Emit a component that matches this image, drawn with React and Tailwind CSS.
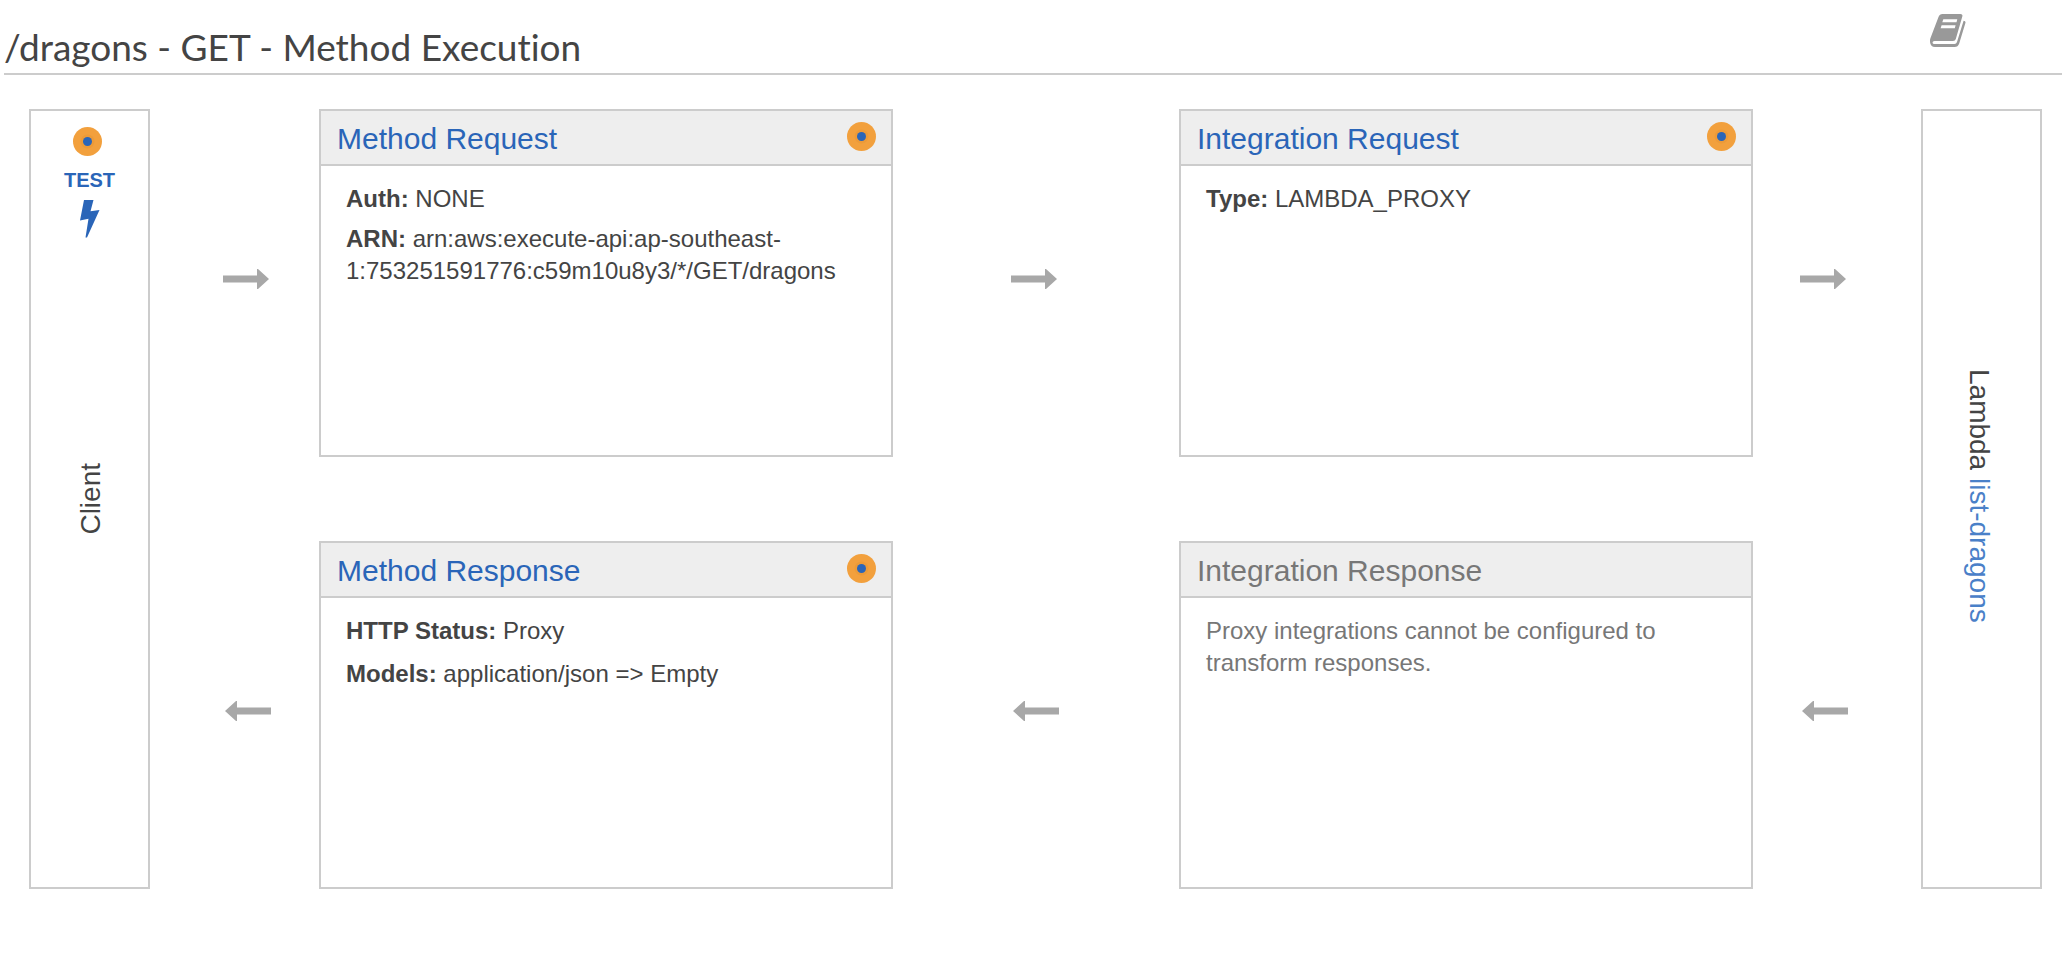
const LINK = "text-[#2a65b8]";

function Arrow({ left = false }) {
  return (
    <svg width="46" height="20" viewBox="0 0 46 20" className="shrink-0" aria-hidden="true">
      <path
        d={left ? "M46 6.5H12V0H11L0 10L11 20H12V13.5H46Z" : "M0 6.5H34V0H35L46 10L35 20H34V13.5H0Z"}
        fill="#a8a8a8"
      />
    </svg>
  );
}

function Dot() {
  return (
    <svg width="29" height="29" viewBox="0 0 29 29" className="shrink-0" aria-hidden="true">
      <circle cx="14.5" cy="14.5" r="14.5" fill="#f2a03d" />
      <circle cx="14.5" cy="14.5" r="7" fill="#ec9a38" />
      <circle cx="14.5" cy="14.5" r="4.5" fill="#2a65b8" />
    </svg>
  );
}

function Bolt() {
  return (
    <svg width="20" height="38" viewBox="0 0 20 38" aria-hidden="true">
      <path d="M4 0H13.5L10.5 11.3L19.5 10L7 37.5H5.5L8.5 18.8L0 20.5Z" fill="#2a65b8" />
    </svg>
  );
}

function Book() {
  return (
    <svg width="36" height="33" viewBox="0 0 36 33" aria-hidden="true">
      <path
        fill="#999"
        d="M12.5 0H30.5Q33 0 32.3 2.5L25.8 25Q25.2 27 23 27H4.5Q2.5 27 2.5 28.5Q2.5 30 4.5 30H24.5Q26.3 30 27 28L33.6 6.8Q36 7 35.4 9L29.2 29.5Q28 33 24.5 33H5Q0.5 33 0 28Q-0.3 26.5 0.5 24L8.5 3Q9.5 0 12.5 0Z"
      />
      <path fill="#fff" d="M13.3 5.3H27.3L26.5 8.3H12.3ZM11.6 11.2H25.6L24.8 14.2H10.6Z" />
    </svg>
  );
}

function Card({ title, disabled = false, children }) {
  return (
    <section className="border-2 border-[#ccc] bg-white">
      <header className="flex items-start justify-between border-b-2 border-[#ccc] bg-[#eee] pt-[11px] pr-[15px] pb-2 pl-4">
        <h2 className="text-[30px] leading-[34px]">
          {disabled ? (
            <span className="text-[#777]">{title}</span>
          ) : (
            <a href="#" className={LINK}>
              {title}
            </a>
          )}
        </h2>
        {!disabled && <Dot />}
      </header>
      <div className="px-[25px] pt-[17px] pb-4 text-2xl leading-8">{children}</div>
    </section>
  );
}

export default function App() {
  return (
    <div className="bg-white pb-[75px] pl-1 font-['Liberation_Sans',Arial,sans-serif] text-[#444]">
      <header className="flex items-start justify-between border-b-2 border-[#ccc] pr-24">
        <h1 className="pt-[22px] pb-0.5 font-[Lato,sans-serif] text-[37px] leading-[49px] [font-variant-ligatures:none]">
          /dragons - GET - Method Execution
        </h1>
        <button type="button" aria-label="Documentation" className="pt-3.5">
          <Book />
        </button>
      </header>

      <main className="grid grid-cols-[121px_169px_1fr_286px_1fr_168px_121px] grid-rows-[minmax(348px,auto)_minmax(348px,auto)] gap-y-[84px] pt-[34px] pr-5 pl-[25px]">
        <section className="row-span-2 grid border-2 border-[#ccc]">
          <button
            type="button"
            className="col-start-1 row-start-1 flex flex-col items-center self-start pt-4 text-xl font-bold text-[#2a65b8]"
          >
            <span className="pr-1">
              <Dot />
            </span>
            <span className="pt-2.5 pb-1.5 leading-7">TEST</span>
            <Bolt />
          </button>
          <h2 className="col-start-1 row-start-1 rotate-180 place-self-center pr-0.5 text-[28px] leading-9 [writing-mode:vertical-rl]">
            Client
          </h2>
        </section>

        <div className="flex items-center justify-start pb-2 pl-[73px]">
          <Arrow />
        </div>
        <Card title="Method Request">
          <p className="pb-2">
            <b>Auth:</b> NONE
          </p>
          <p>
            <b>ARN:</b> arn:aws:execute-api:ap-southeast-1:753251591776:c59m10u8y3/*/GET/dragons
          </p>
        </Card>
        <div className="flex items-center justify-center pr-1 pb-2">
          <Arrow />
        </div>
        <Card title="Integration Request">
          <p>
            <b>Type:</b> LAMBDA_PROXY
          </p>
        </Card>
        <div className="flex items-center justify-end pr-[75px] pb-2">
          <Arrow />
        </div>

        <section className="row-span-2 grid border-2 border-[#ccc] pr-1.5 pb-1.5">
          <h2 className="place-self-center text-[28px] leading-9 [writing-mode:vertical-rl]">
            Lambda{" "}
            <a href="#" className="text-[#4a80c8]">
              list-dragons
            </a>
          </h2>
        </section>

        <div className="flex items-center justify-start pb-2 pl-[75px]">
          <Arrow left />
        </div>
        <Card title="Method Response">
          <p className="pb-[11px]">
            <b>HTTP Status:</b> Proxy
          </p>
          <p>
            <b>Models:</b> application/json =&gt; Empty
          </p>
        </Card>
        <div className="flex items-center justify-center pb-2">
          <Arrow left />
        </div>
        <Card title="Integration Response" disabled>
          <p className="text-[#777]">Proxy integrations cannot be configured to transform responses.</p>
        </Card>
        <div className="flex items-center justify-end pr-[73px] pb-2">
          <Arrow left />
        </div>
      </main>
    </div>
  );
}
